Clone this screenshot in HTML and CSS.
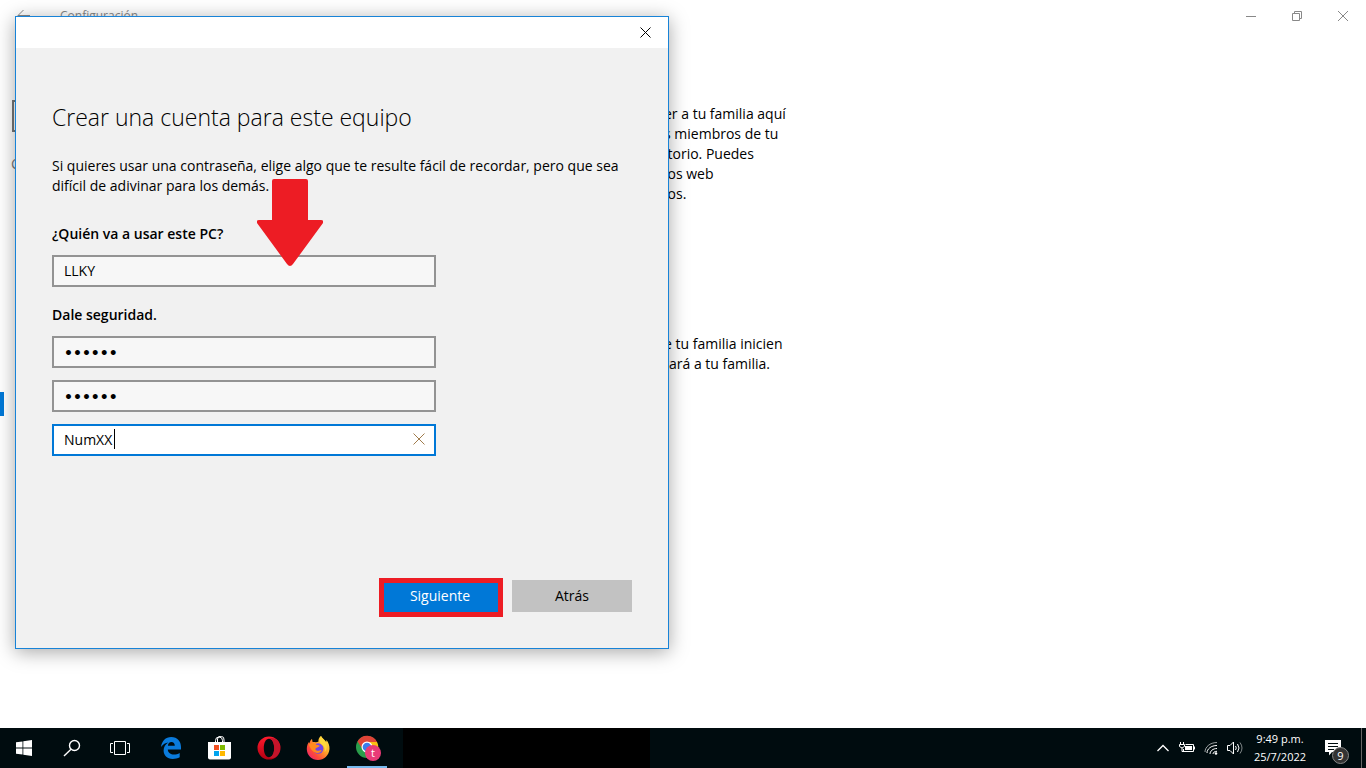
FILE: index.html
```html
<!DOCTYPE html>
<html lang="es">
<head>
  <meta charset="UTF-8">
  <meta name="viewport" content="width=device-width, initial-scale=1.0">
  <title>Configuración</title>
  <link rel="stylesheet" href="styles.css">
</head>
<body>
<div class="desktop">
  <!-- Settings window -->
  <main class="settings">
    <header class="settings-bar">
      <button class="back" aria-label="Volver">
        <svg width="14" height="12" viewBox="0 0 14 12"><path d="M13 5.500H1M6.500 0L1 5.500 6.500 11"/></svg>
      </button>
      <span class="settings-title">Configuración</span>
      <div class="caption">
        <button aria-label="Minimizar"><svg width="10" height="10" viewBox="0 0 10 10"><path d="M0 5.500h10"/></svg></button>
        <button aria-label="Restaurar"><svg width="10" height="10" viewBox="0 0 10 10"><path d="M.5 2.500h7v7h-7zM2.500 2.500v-2h7v7h-2"/></svg></button>
        <button aria-label="Cerrar"><svg width="10" height="10" viewBox="0 0 10 10"><path d="M0 0l10 10M10 0L0 10"/></svg></button>
      </div>
    </header>
    <div class="settings-body">
      <nav class="sidebar">
        <input class="search" type="search" aria-label="Buscar una configuración">
        <h2>C</h2>
        <a class="current" href="#" aria-label="Familia y otras personas"></a>
      </nav>
      <section class="family">
        <p>er a tu familia aquí<br>s miembros de tu<br>itorio. Puedes<br>ios web<br>ios.</p>
        <p>e tu familia inicien<br>tará a tu familia.</p>
      </section>
    </div>
  </main>

  <!-- New account dialog -->
  <div class="dialog" role="dialog" aria-labelledby="dialog-title">
    <div class="dialog-bar">
      <button class="dialog-close" aria-label="Cerrar"><svg width="11" height="11" viewBox="0 0 11 11"><path d="M.5.500l10 10M10.500.500l-10 10"/></svg></button>
    </div>
    <form class="account">
      <h1 id="dialog-title">Crear una cuenta para este equipo</h1>
      <p class="intro">Si quieres usar una contraseña, elige algo que te resulte fácil de recordar, pero que sea difícil de adivinar para los demás.</p>
      <label for="user">¿Quién va a usar este PC?</label>
      <input class="field" id="user" type="text" value="LLKY">
      <label for="pass">Dale seguridad.</label>
      <div class="security">
        <input class="field password" id="pass" type="password" value="abcdef">
        <input class="field password" type="password" value="abcdef" aria-label="Repetir contraseña">
        <div class="hint">
          <input class="field active" type="text" value="NumXX" aria-label="Indicio de contraseña">
          <span class="caret"></span>
          <button class="clear" type="button" aria-label="Borrar"><svg width="12" height="12" viewBox="0 0 12 12"><path d="M.5.500l11 11M11.500.500l-11 11"/></svg></button>
        </div>
      </div>
      <div class="actions">
        <button class="btn next" type="button">Siguiente</button>
        <button class="btn" type="button">Atrás</button>
      </div>
    </form>
    <svg class="arrow" width="66" height="88" viewBox="0 0 66 88"><path d="M17 0h32q2 0 2 2v39h13q3 0 2 3L36 85q-3 4-6 0L0 44q-1-3 2-3h13V2q0-2 2-2z"/></svg>
  </div>
</div>

<footer class="taskbar">
  <button class="task" aria-label="Inicio">
    <svg width="16" height="16" viewBox="0 0 16 16" fill="#fff"><path d="M0 2.300l6.500-.9v6.200H0zM7.300 1.300L16 0v7.600H7.300zM0 8.400h6.500v6.200L0 13.700zM7.300 8.400H16V16l-8.700-1.300z"/></svg>
  </button>
  <button class="task" aria-label="Buscar">
    <svg width="18" height="18" viewBox="0 0 18 18" fill="none" stroke="#fff" stroke-width="1.400"><circle cx="11.500" cy="6.500" r="5"/><path d="M8 10.200L1 17"/></svg>
  </button>
  <button class="task" aria-label="Vista de tareas">
    <svg width="20" height="14" viewBox="0 0 20 14" fill="none" stroke="#fff"><path d="M4.500.5h11v13h-11zM3 2.500H.5v9H3M17 2.500h2.500v9H17"/></svg>
  </button>
  <div class="apps">
    <button class="task" aria-label="Edge">
      <svg width="20" height="22" viewBox="0 0 20 22" fill="#0a7bdc"><path d="M0 10C.8 4 4.500 0 10.300 0 16.500 0 20 4.500 20 10v2.600H6.800c.2 3.400 3 5 6 5 2.200 0 4.200-.6 5.900-1.700v4.400c-2 1.200-4.500 1.700-7 1.700C6 22 2.600 18.300 2.600 13.500c0-3.500 1.900-6.300 4.700-7.900C4.500 5.800 2 7.500 0 10zM6.900 8.700h6.900c0-2.500-1.300-3.800-3.400-3.800-2 0-3.300 1.500-3.500 3.800z"/></svg>
    </button>
    <button class="task" aria-label="Microsoft Store">
      <svg width="24" height="24" viewBox="0 0 24 24"><path d="M7.500 6V4.500a3.500 3.500 0 0 1 7 0V6M9.500 6V3a3 3 0 0 1 6.500 1v2" fill="none" stroke="#fff"/><path d="M0 6h23v15.500q0 2-2 2H2q-2 0-2-2z" fill="#fff"/><path fill="#f25022" d="M6 9h5v5H6z"/><path fill="#7fba00" d="M12 9h5v5h-5z"/><path fill="#00a4ef" d="M6 15h5v5H6z"/><path fill="#ffb900" d="M12 15h5v5h-5z"/></svg>
    </button>
    <button class="task" aria-label="Opera">
      <svg width="24" height="24" viewBox="0 0 24 24">
        <defs><linearGradient id="opera" x1="0" y1="0" x2="0" y2="1"><stop offset="0" stop-color="#ff1b2d"/><stop offset="1" stop-color="#b30012"/></linearGradient></defs>
        <path fill="url(#opera)" fill-rule="evenodd" d="M12 .5a11.500 11.500 0 1 0 0 23 11.500 11.500 0 0 0 0-23zm0 2.200c3.200 0 5.200 4.200 5.200 9.300s-2 9.300-5.200 9.300S6.800 17.100 6.800 12 8.800 2.700 12 2.700z"/>
        <path fill="#c4142a" d="M12 2.700C14 1.500 17 1.800 19.300 3.500a11.500 11.500 0 0 1 0 17c-2.300 1.700-5.300 2-7.300.8 3.200 0 5.200-4.200 5.200-9.300S15.200 2.700 12 2.700z"/>
      </svg>
    </button>
    <button class="task" aria-label="Firefox">
      <svg width="24" height="24" viewBox="0 0 24 24">
        <defs><linearGradient id="fox" x1="1" y1="0" x2="0" y2="1"><stop offset="0" stop-color="#fff44f"/><stop offset=".4" stop-color="#ffa62a"/><stop offset=".7" stop-color="#ff4a39"/><stop offset="1" stop-color="#e31587"/></linearGradient></defs>
        <path fill="url(#fox)" d="M15 0c1 2 4 4 5.200 6l.3-2c2 2.500 3.200 5.500 3 9C23 19.500 18 24 12 24S.8 19.500.8 13c0-3.500 1-5.500 2.200-7l.5 1.600C4 5 5 3.500 6 3l.6 3C9 6 11 6.500 12.500 5.500 12 3.500 13.300 1 15 0z"/>
        <circle cx="12.200" cy="12.500" r="5.200" fill="#7145e8"/>
        <path fill="#ff8a1e" d="M2.800 8.500c3-2.500 6-1.800 8 .5 1.400 0 2.500.3 3 1-1 1.500-2.800 1.200-4 2.200-1 1 0 2.600 2 2.600 1.700 0 2.500-.8 4-.5-1 2.300-3.500 3.200-5.800 2.400C6 15.500 4 12 2.800 8.500z"/>
        <path fill="#ffd83c" d="M15 0c1 2.500 5 5 5.700 9 .4 3-.5 5.500-2 7 .5-3.500-.5-6-3-7.500-2.500-2-3-5.500-.7-8.500z"/>
      </svg>
    </button>
    <button class="task open" aria-label="Google Chrome">
      <svg width="26" height="26" viewBox="0 0 26 26">
        <circle cx="12" cy="12" r="11" fill="#2a9d4b"/>
        <path fill="#fbbf12" d="M12 7h10a11 11 0 0 1-10.500 16L16.500 14z"/>
        <path fill="#df4437" d="M2.500 6.500A11 11 0 0 1 22 7H12L7.500 14z"/>
        <circle cx="12" cy="12" r="5.500" fill="#fff"/><circle cx="12" cy="12" r="4.300" fill="#3b7ded"/>
        <circle cx="18" cy="18" r="8" fill="#e93b77"/>
        <text class="profile" x="18" y="22" text-anchor="middle">t</text>
      </svg>
    </button>
  </div>
  <div class="task-space"></div>
  <div class="tray">
    <button class="tray-icon" aria-label="Mostrar iconos ocultos"><svg width="12" height="8" viewBox="0 0 12 8"><path d="M.5 7L6 1.500 11.500 7" stroke-width="1.300"/></svg></button>
    <button class="tray-icon" aria-label="Batería"><svg width="16" height="12" viewBox="0 0 16 12"><path d="M6.500 2.500h8v7h-10V7M15.500 4.500v3M1.500 0v2M4.500 0v2M.5 2.500h5v2q-2.500 3-5 0zM3 6v3.500h2"/><path d="M6 4h7v4H6z" fill="#fff" stroke="none"/></svg></button>
    <button class="tray-icon" aria-label="Red"><svg width="14" height="14" viewBox="0 0 14 14"><path d="M1 11C1 6 6 1.500 13 1.500" opacity=".6"/><path d="M3 12c0-4 4-7.500 10-7.500M6 13c0-3 3-5.500 7-5.500M9 13c0-1.500 1.500-2.700 4-2.700"/><circle cx="12" cy="12.500" r="1.300" fill="#fff" stroke="none"/></svg></button>
    <button class="tray-icon" aria-label="Volumen"><svg width="16" height="14" viewBox="0 0 16 14"><path d="M.5 4.500h2.500L6.500 1v12L3 9.500H.5zM8.500 5q1.500 2 0 4M10.500 3q3 4 0 8"/><path d="M13 1.500q4 5.500 0 11" opacity=".5"/></svg></button>
    <button class="clock"><span>9:49 p.m.</span><span>25/7/2022</span></button>
    <button class="notifications" aria-label="Notificaciones">
      <svg width="16" height="16" viewBox="0 0 16 16"><path fill="#fff" d="M0 0h16v12H7l-3 3.500V12H0z"/><path d="M3 3.500h10M3 6.500h10M3 9.500h6" stroke="#000c0f"/></svg>
      <span class="badge">9</span>
    </button>
    <button class="show-desktop" aria-label="Mostrar escritorio"></button>
  </div>
</footer>
</body>
</html>
```
FILE: styles.css
```css
* {
  box-sizing: border-box;
}

body {
  margin: 0;
  height: 100vh;
  display: flex;
  flex-direction: column;
  overflow: hidden;
  font-family: "Open Sans", "Noto Sans", sans-serif;
  font-size: 14px;
  line-height: 20px;
  color: #000;
  background: #fff;
}

button,
input {
  font: inherit;
  color: inherit;
}

button {
  display: flex;
  align-items: center;
  justify-content: center;
  padding: 0;
  border: 0;
  background: none;
}

.desktop {
  position: relative;
  flex: 1;
  min-height: 0;
}

/* Settings window */
.settings-bar {
  display: flex;
  align-items: center;
  height: 32px;
  color: #888;
}

.settings-bar svg,
.dialog-bar svg,
.clear svg {
  fill: none;
  stroke: currentColor;
}

.back {
  width: 48px;
}

.settings-title {
  margin-left: 12px;
  font-size: 12px;
}

.caption {
  display: flex;
  margin-left: auto;
}

.caption button {
  width: 46px;
  height: 32px;
}

.settings-body {
  display: flex;
}

.sidebar {
  flex: 0 0 320px;
  padding-top: 68px;
}

.search {
  display: block;
  width: 296px;
  height: 32px;
  margin: 0 12px;
  border: 2px solid #777;
  background: #fff;
}

.sidebar h2 {
  margin: 22px 11px 0;
  font-size: 14px;
  font-weight: 400;
  color: #777;
}

.current {
  display: block;
  height: 24px;
  margin-top: 218px;
  border-left: 4px solid #0078d7;
}

.family {
  margin-left: 344px;
  padding-top: 72px;
}

.family p {
  margin: 0 0 130px;
}

/* Account dialog */
.dialog {
  position: absolute;
  top: 16px;
  left: 15px;
  width: 654px;
  max-width: 100%;
  border: 1px solid #1883d7;
  background: #f1f1f1;
  box-shadow: 0 3px 18px rgba(0, 0, 0, 0.35);
}

.dialog-bar {
  display: flex;
  justify-content: flex-end;
  height: 31px;
  background: #fff;
}

.dialog-close {
  width: 46px;
}

.account {
  display: flex;
  flex-direction: column;
  padding: 53px 36px 36px;
}

.account h1 {
  margin: 0;
  font-size: 23px;
  font-weight: 300;
  line-height: 32px;
}

.intro {
  margin: 23px 0 10px;
}

.account label {
  margin: 18px 0 11px;
  font-weight: 600;
}

.field {
  display: block;
  width: 384px;
  max-width: 100%;
  height: 32px;
  padding: 0 10px 2px;
  border: 2px solid #939393;
  outline: none;
  background: #f7f7f7;
}

.field.password {
  padding-top: 2px;
  padding-bottom: 0;
  font-family: "DejaVu Sans", sans-serif;
  font-weight: 700;
}

.field.active {
  border-color: #0078d7;
  background: #fff;
}

.security {
  display: flex;
  flex-direction: column;
  gap: 12px;
}

.hint {
  position: relative;
  width: 384px;
  max-width: 100%;
}

.caret {
  position: absolute;
  top: 5px;
  left: 62px;
  width: 1px;
  height: 20px;
  background: #000;
}

.clear {
  position: absolute;
  top: 1px;
  right: 2px;
  width: 30px;
  height: 28px;
  color: #a07c4c;
}

.actions {
  display: flex;
  justify-content: flex-end;
  gap: 12px;
  margin-top: 124px;
}

.btn {
  width: 120px;
  height: 32px;
  background: #c2c2c2;
}

.next {
  position: relative;
  background: #0078d7;
  color: #fff;
}

/* Red highlight around the button */
.next::after {
  content: "";
  position: absolute;
  inset: -2px -3px -5px -1px;
  border: 5px solid #ed1c24;
}

.arrow {
  position: absolute;
  top: 162px;
  left: 241px;
  fill: #ed1c24;
}

/* Taskbar */
.taskbar {
  display: flex;
  height: 40px;
  background: #000c0f;
  color: #fff;
}

.task {
  width: 48px;
  height: 40px;
}

.apps {
  display: flex;
  gap: 1px;
  margin-left: 3px;
}

.open {
  position: relative;
}

.open::after {
  content: "";
  position: absolute;
  bottom: 0;
  left: 4px;
  width: 40px;
  height: 2px;
  background: #76b9ed;
}

.open svg {
  margin-left: 2px;
}

.profile {
  font-size: 11px;
  fill: #fff;
}

.task-space {
  width: 247px;
  margin-left: 12px;
  background: #000;
}

.tray {
  display: flex;
  margin-left: auto;
}

.tray-icon {
  width: 24px;
}

.tray-icon svg {
  fill: none;
  stroke: #fff;
}

.clock {
  flex-direction: column;
  width: 66px;
  font-size: 11px;
  line-height: 18px;
}

.notifications {
  position: relative;
  width: 40px;
  margin-right: 8px;
}

.badge {
  position: absolute;
  top: 19px;
  left: 19px;
  width: 17px;
  height: 17px;
  border: 1px solid #888;
  border-radius: 50%;
  background: #333;
  font-size: 11px;
  line-height: 15px;
}

.show-desktop {
  width: 5px;
  border-left: 1px solid #666;
}
```
